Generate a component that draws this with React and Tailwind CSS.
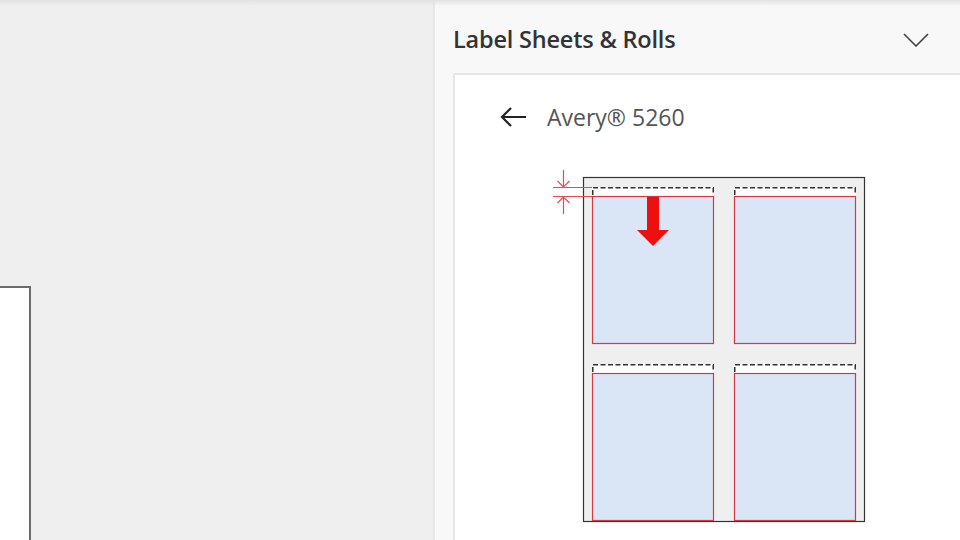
import React from "react";

function Sheet() {
  const labels = [
    { x: 592, y: 196 },
    { x: 734, y: 196 },
    { x: 592, y: 373 },
    { x: 734, y: 373 },
  ];
  return (
    <svg width="330" height="370" viewBox="545 165 330 370" className="block">
      <rect x="583.5" y="177.5" width="281" height="344" fill="#efefef" stroke="#333" strokeWidth="1.2" />
      {labels.map((l, i) => (
        <g key={i}>
          <rect x={l.x} y={l.y - 9} width="122" height="9" fill="#ffffff" />
          <path
            d={`M${l.x + 0.75} ${l.y - 1} V${l.y - 8.25} H${l.x + 121.25} V${l.y - 1}`}
            fill="none"
            stroke="#333"
            strokeWidth="1.5"
            strokeDasharray="5 2.5"
          />
          <rect x={l.x + 0.5} y={l.y + 0.5} width="121" height="147" fill="#dae6f6" stroke="#d23a44" strokeWidth="1.2" />
        </g>
      ))}
      {/* dimension lines */}
      <line x1="553" y1="187.5" x2="592" y2="187.5" stroke="#e84a50" strokeWidth="1.2" />
      <line x1="553" y1="196.5" x2="592" y2="196.5" stroke="#e84a50" strokeWidth="1.2" />
      <line x1="563.5" y1="170" x2="563.5" y2="187" stroke="#e84a50" strokeWidth="1.2" />
      <path d="M557.5 181 L563.5 187 L569.5 181" fill="none" stroke="#e84a50" strokeWidth="1.2" />
      <line x1="563.5" y1="197" x2="563.5" y2="214" stroke="#e84a50" strokeWidth="1.2" />
      <path d="M557.5 203 L563.5 197 L569.5 203" fill="none" stroke="#e84a50" strokeWidth="1.2" />
      {/* arrow */}
      <path d="M647 197 H659 V230 H669 L653 246 L637 230 H647 Z" fill="#ee0f0f" />
    </svg>
  );
}

export default function App() {
  return (
    <div
      className="relative flex w-[960px] h-[540px] overflow-hidden bg-[#efefef]"
      style={{ fontFamily: '"Open Sans", "Noto Sans", sans-serif' }}
    >
      <div className="absolute left-0 top-0 w-full h-[6px] bg-gradient-to-b from-[#e2e2e2] to-transparent pointer-events-none" />
      <div className="w-[433px] shrink-0 pt-[286px]">
        <div className="w-[31px] h-full bg-white border-t-2 border-r-2 border-[#6b6b6b]" />
      </div>
      <div className="w-[2px] shrink-0 bg-[#e6e6e6]" />
      <div className="flex-1 flex flex-col bg-[#f8f8f8] pl-[18px]">
        <div className="h-[73px] flex items-center justify-between pr-[31px] pt-[6px]">
          <span className="text-[23.5px] font-semibold text-[#333] tracking-[-0.2px]">Label Sheets &amp; Rolls</span>
          <svg width="26" height="14" viewBox="0 0 26 14" className="block">
            <path d="M1 1 L13 13 L25 1" fill="none" stroke="#444" strokeWidth="1.6" />
          </svg>
        </div>
        <div className="flex-1 bg-white border-t-2 border-l-2 border-[#e6e6e6]">
          <div className="flex items-center h-[88px] pl-[44px] pb-[4px]">
            <svg width="28" height="22" viewBox="0 0 28 22" className="block">
              <path d="M27 11 H3 M12 2 L3 11 L12 20" fill="none" stroke="#222" strokeWidth="2.2" />
            </svg>
            <span className="ml-[20px] text-[23px] text-[#555]">Avery® 5260</span>
          </div>
          <div className="pl-[90px] pt-[2px]">
            <Sheet />
          </div>
        </div>
      </div>
    </div>
  );
}
